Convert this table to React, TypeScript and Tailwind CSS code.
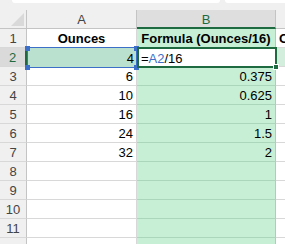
import React from "react";

const GRID = "grid grid-cols-[27px_110px_139px_1fr] h-[19px]";

const data: { n: number; a: string; b: string }[] = [
  { n: 3, a: "6", b: "0.375" },
  { n: 4, a: "10", b: "0.625" },
  { n: 5, a: "16", b: "1" },
  { n: 6, a: "24", b: "1.5" },
  { n: 7, a: "32", b: "2" },
  { n: 8, a: "", b: "" },
  { n: 9, a: "", b: "" },
  { n: 10, a: "", b: "" },
  { n: 11, a: "", b: "" },
];

const RowHead = ({ n }: { n?: number }) => (
  <div className="flex items-end justify-center pb-[2px] bg-[#f0f0f0] border-r border-b border-r-[#c4c4c4] border-b-[#d8d8d8] text-[#444] text-[13px] leading-none">
    {n}
  </div>
);

export default function App() {
  return (
    <div
      className="w-[285px] h-[244px] overflow-hidden bg-[#f0f0f0] text-[13px] text-black"
      style={{ fontFamily: '"Liberation Sans", Arial, sans-serif' }}
    >
      {/* formula bar bottom edge */}
      <div className="flex h-[10px] pl-[12px] gap-[5px]">
        <div className="w-[208px] h-[3px] bg-white rounded-b-[4px]" />
        <div className="flex-1 h-[3px] bg-white rounded-bl-[4px]" />
      </div>

      {/* column headers */}
      <div className={GRID}>
        <div className="relative bg-[#f0f0f0] border-r border-b border-[#c4c4c4]">
          <svg className="absolute right-[2px] bottom-[2px]" width="13" height="13" viewBox="0 0 13 13">
            <polygon points="13,0 13,13 0,13" fill="#d9d9d9" />
          </svg>
        </div>
        <div className="flex items-end justify-center pb-[2px] bg-[#f0f0f0] border-r border-b border-[#c4c4c4] text-[#444] leading-none">
          A
        </div>
        <div className="flex items-end justify-center pb-[1px] bg-[#dedede] border-r border-r-[#c4c4c4] border-b-2 border-b-[#1e6b41] text-[#1e6b41] leading-none">
          B
        </div>
        <div className="bg-[#f0f0f0] border-b border-[#c4c4c4]" />
      </div>

      {/* row 1 */}
      <div className={GRID}>
        <RowHead n={1} />
        <div className="flex items-end justify-center pb-[2px] bg-white border-r border-b border-[#d8d8d8] font-bold leading-none">
          Ounces
        </div>
        <div className="flex items-end justify-center pb-[2px] bg-[#c6efd5] border-r border-b border-r-[#a9cfb7] border-b-[#acd6bb] font-bold leading-none whitespace-nowrap overflow-hidden">
          Formula (Ounces/16)
        </div>
        <div className="flex items-end pl-[3px] pb-[2px] bg-white border-b border-[#d8d8d8] font-bold leading-none whitespace-nowrap overflow-hidden">
          C
        </div>
      </div>

      {/* row 2 */}
      <div className={GRID}>
        <div className="flex items-end justify-center pb-[2px] bg-[#dadada] border-r-2 border-b border-r-[#1e6b41] border-b-[#d8d8d8] text-[#1e6b41] leading-none">
          2
        </div>
        <div className="relative flex items-end justify-end pr-[3px] pb-[2px] bg-[#bae1d0] leading-none">
          4
          <div className="absolute -top-[1px] left-0 right-0 -bottom-[1px] border border-[#3b6fc8]" />
          <div className="absolute -top-[2px] -left-[2px] w-[5px] h-[5px] bg-[#3b6fc8]" />
          <div className="absolute -top-[2px] -right-[2px] w-[5px] h-[5px] bg-[#3b6fc8]" />
          <div className="absolute -bottom-[3px] -left-[2px] w-[5px] h-[5px] bg-[#3b6fc8]" />
          <div className="absolute -bottom-[3px] -right-[2px] w-[5px] h-[5px] bg-[#3b6fc8]" />
        </div>
        <div className="relative flex items-end pl-[4px] pb-[2px] bg-white leading-none">
          <span>=</span>
          <span className="text-[#3b6fc8]">A2</span>
          <span>/16</span>
          <div className="absolute -top-[1px] left-0 -right-[1px] -bottom-[1px] border-2 border-[#1e6b41]" />
          <div className="absolute -bottom-[3px] -right-[3px] w-[6px] h-[6px] bg-[#1e6b41] border border-white" />
        </div>
        <div className="bg-[#d3eedd] border-b border-[#d8d8d8]" />
      </div>

      {data.map((r) => (
        <div key={r.n} className={GRID}>
          <RowHead n={r.n} />
          <div className="flex items-end justify-end pr-[3px] pb-[2px] bg-white border-r border-b border-[#d8d8d8] leading-none">
            {r.a}
          </div>
          <div className="flex items-end justify-end pr-[3px] pb-[2px] bg-[#c6efd5] border-r border-b border-r-[#a9cfb7] border-b-[#acd6bb] leading-none">
            {r.b}
          </div>
          <div className="bg-white border-b border-[#d8d8d8]" />
        </div>
      ))}

      {/* row 12, only its top edge shows */}
      <div className={GRID}>
        <RowHead />
        <div className="bg-white border-r border-b border-[#d8d8d8]" />
        <div className="bg-[#c6efd5] border-r border-b border-r-[#a9cfb7] border-b-[#acd6bb]" />
        <div className="bg-white border-b border-[#d8d8d8]" />
      </div>
    </div>
  );
}
